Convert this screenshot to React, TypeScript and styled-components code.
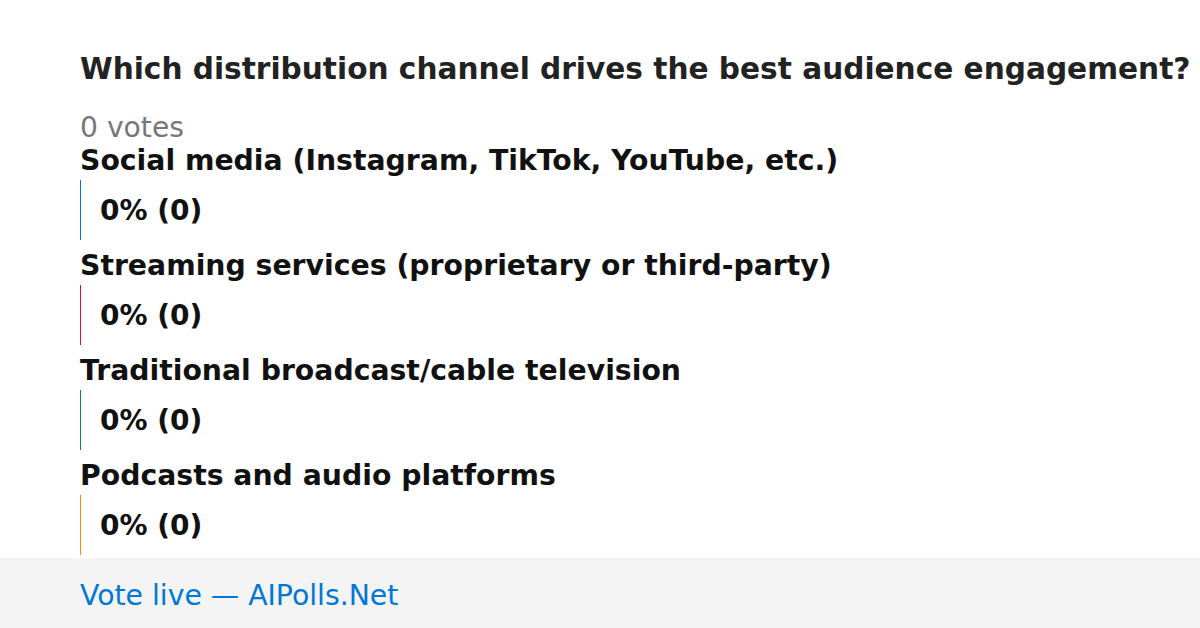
import React from "react";
import styled, { createGlobalStyle } from "styled-components";

const GlobalStyle = createGlobalStyle`
  html, body {
    margin: 0;
    padding: 0;
    background: #fff;
  }
  body {
    font-family: "DejaVu Sans", "Liberation Sans", sans-serif;
  }
`;

const Page = styled.div`
  width: 1200px;
  height: 628px;
  display: flex;
  flex-direction: column;
  overflow: hidden;
`;

const Main = styled.main`
  flex: 1;
  min-height: 0;
  padding: 51px 0 0 80px;
`;

const Title = styled.h1`
  margin: 0;
  font-size: 29.6px;
  line-height: 36px;
  font-weight: bold;
  color: #222;
  white-space: nowrap;
`;

const Votes = styled.div`
  margin-top: 24px;
  font-size: 28.2px;
  line-height: 34px;
  color: #777;
`;

const Options = styled.ul`
  list-style: none;
  margin: 0;
  padding: 0;
`;

const Option = styled.li`
  margin-bottom: 10px;
  &:last-child {
    margin-bottom: 0;
  }
`;

const Label = styled.div`
  font-size: 28.3px;
  line-height: 32px;
  font-weight: bold;
  color: #111;
  white-space: nowrap;
`;

const BarRow = styled.div`
  position: relative;
  margin-top: 3px;
  height: 60px;
  display: flex;
  align-items: center;
`;

const Bar = styled.div<{ $color: string }>`
  position: absolute;
  left: 0;
  top: 0;
  bottom: 0;
  min-width: 1px;
  background: ${(p) => p.$color};
`;

const Count = styled.span`
  position: relative;
  padding-left: 20px;
  font-size: 28px;
  font-weight: bold;
  color: #111;
`;

const Footer = styled.footer`
  flex-shrink: 0;
  box-sizing: border-box;
  height: 70px;
  background: #f4f4f4;
  display: flex;
  align-items: center;
  padding: 4px 80px 0;
  font-size: 28.3px;
  color: #0078d4;
`;

const options = [
  { label: "Social media (Instagram, TikTok, YouTube, etc.)", color: "#0078d4", votes: 0 },
  { label: "Streaming services (proprietary or third-party)", color: "#e81123", votes: 0 },
  { label: "Traditional broadcast/cable television", color: "#10893e", votes: 0 },
  { label: "Podcasts and audio platforms", color: "#ff8c00", votes: 0 },
];

const App = () => {
  const total = options.reduce((s, o) => s + o.votes, 0);
  return (
    <Page>
      <GlobalStyle />
      <Main>
        <Title>Which distribution channel drives the best audience engagement?</Title>
        <Votes>{total} votes</Votes>
        <Options>
          {options.map((o) => {
            const pct = total ? Math.round((o.votes / total) * 100) : 0;
            return (
              <Option key={o.label}>
                <Label>{o.label}</Label>
                <BarRow>
                  <Bar $color={o.color} style={{ width: `${pct}%` }} />
                  <Count>
                    {pct}% ({o.votes})
                  </Count>
                </BarRow>
              </Option>
            );
          })}
        </Options>
      </Main>
      <Footer>Vote live — AIPolls.Net</Footer>
    </Page>
  );
};

export default App;
